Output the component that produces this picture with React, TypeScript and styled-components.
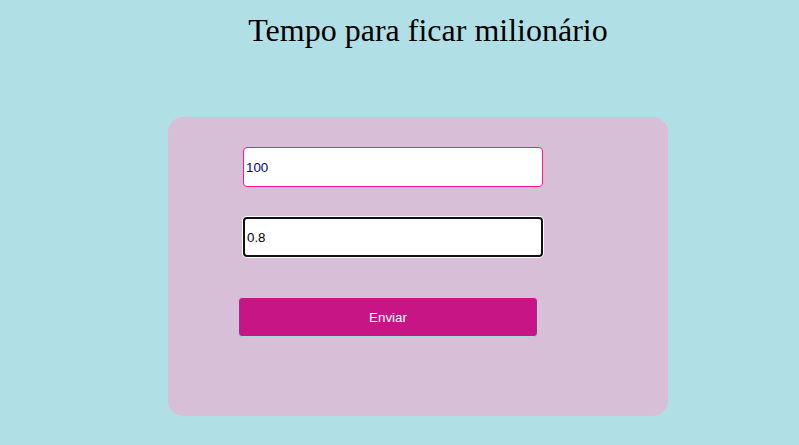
import styled, { createGlobalStyle } from "styled-components";

const GlobalStyle = createGlobalStyle`
    html, body {
        margin: 0;
        padding: 0;
        background: #b0e0e6;
    }
    body {
        min-height: 445px;
    }
`;

const Page = styled.div`
    display: flex;
    flex-direction: column;
    min-height: 445px;
`;

const Title = styled.h1`
    margin: 12px 0 0 0;
    padding-left: 57px;
    text-align: center;
    font-family: "Liberation Serif", "Times New Roman", serif;
    font-size: 32px;
    font-weight: normal;
    color: #000;
    line-height: 36px;
`;

const Card = styled.div`
    margin: 69px 0 0 168px;
    width: 500px;
    height: 299px;
    box-sizing: border-box;
    padding: 30px 0 0 75px;
    background: #d8bfd8;
    border-radius: 15px;
`;

const Form = styled.form`
    display: flex;
    flex-direction: column;
    align-items: flex-start;
`;

const Field = styled.input<{ $focused?: boolean; $ink?: string }>`
    width: 300px;
    height: 40px;
    box-sizing: border-box;
    margin: 0 0 30px 0;
    padding: 0 2px;
    background: #fff;
    font-family: "Liberation Sans", Arial, sans-serif;
    font-size: 13.33px;
    color: ${(p) => p.$ink || "#000"};
    border-radius: 4px;
    border: ${(p) => (p.$focused ? "2px solid #101010" : "1px solid #ff1493")};
    box-shadow: ${(p) => (p.$focused ? "0 0 0 1px #fff" : "none")};
    outline: none;
`;

const Submit = styled.button`
    margin: 10px 0 0 -5px;
    width: 300px;
    height: 40px;
    box-sizing: border-box;
    background: #c71585;
    color: #fff;
    border: 1px solid #a9d8e0;
    border-radius: 4px;
    font-family: "Liberation Sans", Arial, sans-serif;
    font-size: 13.33px;
    cursor: pointer;
`;

function App() {
    return (
        <>
            <GlobalStyle />
            <Page>
                <Title>Tempo para ficar milionário</Title>
                <Card>
                    <Form onSubmit={(e) => e.preventDefault()}>
                        <Field type="text" defaultValue="100" $ink="#000080" />
                        <Field type="text" defaultValue="0.8" $focused />
                        <Submit type="submit">Enviar</Submit>
                    </Form>
                </Card>
            </Page>
        </>
    );
}

export default App;
